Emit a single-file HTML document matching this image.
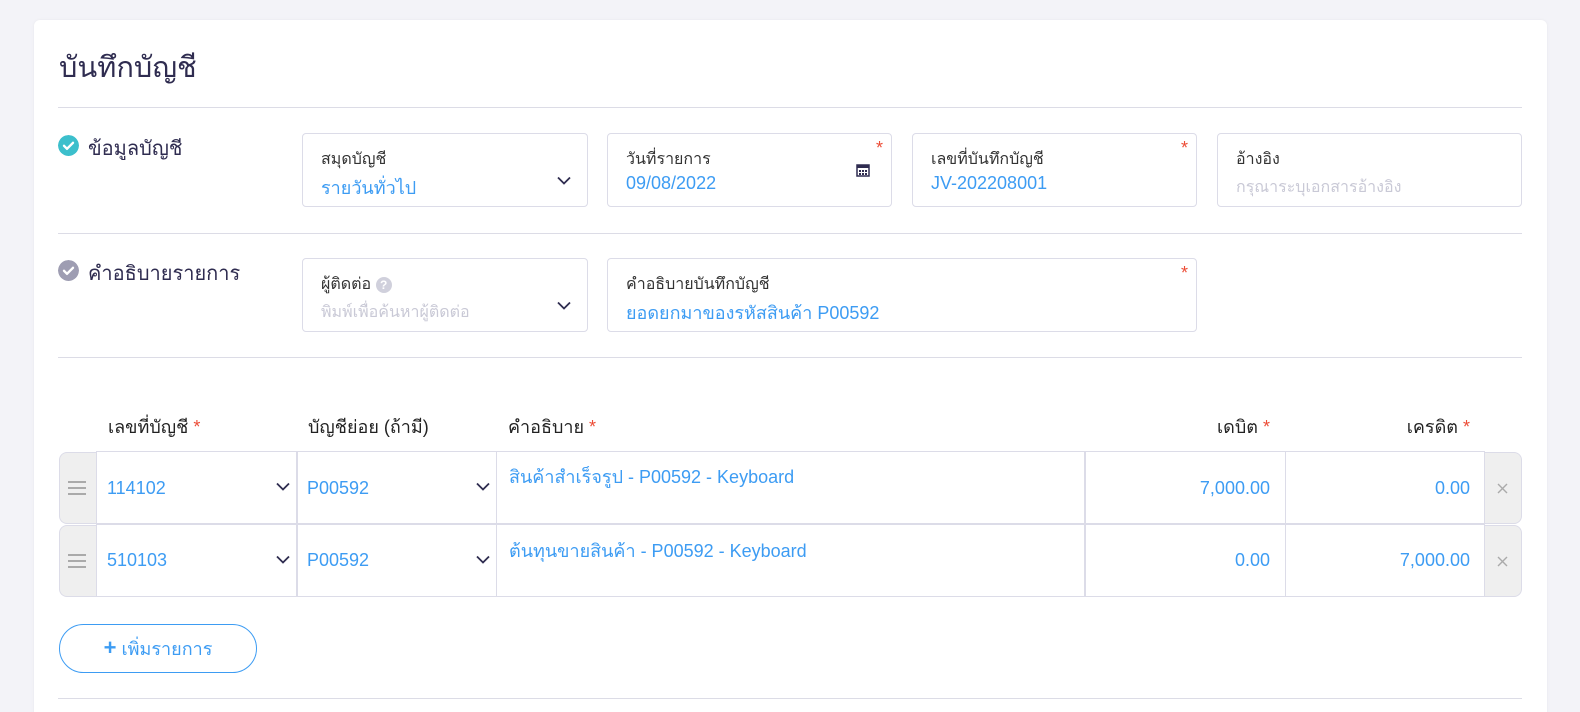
<!DOCTYPE html>
<html style="width:1580px;height:712px;overflow:hidden"><head><meta charset="utf-8">
<style>
*{box-sizing:border-box;margin:0;padding:0}
html,body{width:1580px;height:712px;overflow:hidden}
body{background:#f3f3f8;font-family:"Liberation Sans","DejaVu Sans",sans-serif;position:relative}
.card{position:absolute;left:34px;top:20px;width:1513px;height:700px;background:#fff;border-radius:6px;box-shadow:0 0 3px rgba(0,0,0,.05)}
.abs{position:absolute}
.title{left:59px;top:44px;font-size:29px;color:#2f2c50}
.hr{position:absolute;left:58px;width:1464px;height:1px;background:#dcdce6}
.sec{font-size:20px;color:#2f2c50;left:88px}
.chk{width:21px;height:21px;border-radius:50%;left:58px}
.box{position:absolute;border:1px solid #dcdce8;border-radius:4px;height:74px;background:#fff}
.lab{position:absolute;left:18px;top:13px;font-size:16px;color:#333}
.val{position:absolute;left:18px;top:39px;font-size:18px;color:#3d9cf3}
.ph{color:#c9c9d6;font-size:16px;top:41px}
.star{position:absolute;right:8px;top:4px;color:#ec4c36;font-size:18px}
.chev{position:absolute;right:16px;top:42px}
.th{position:absolute;top:412px;font-size:18px;color:#222}
.th b{color:#ec4c36;font-weight:normal}
.cell{position:absolute;border:1px solid #dcdce8;background:#fff;height:73px}
.cv{position:absolute;font-size:18px;color:#3d9cf3}
.side{position:absolute;background:#efefef;border:1px solid #dcdce8;height:72px}
</style></head><body>
<div class="card"></div>
<div class="abs title">บันทึกบัญชี</div>
<div class="hr" style="top:107px"></div>
<svg class="abs chk" style="top:135px" viewBox="0 0 21 21"><circle cx="10.5" cy="10.5" r="10.5" fill="#3cbfcc"/><path d="M6 10.8l3 3 6-6" stroke="#fff" stroke-width="2.4" fill="none" stroke-linecap="round" stroke-linejoin="round"/></svg>
<div class="abs sec" style="top:132px">ข้อมูลบัญชี</div>
<div class="box" style="left:302px;top:133px;width:286px"><div class="lab">สมุดบัญชี</div><div class="val">รายวันทั่วไป</div>
<svg class="chev" width="14" height="9" viewBox="0 0 14 9"><path d="M1 1.5l6 6 6-6" stroke="#2f2c50" stroke-width="1.8" fill="none"/></svg></div>
<div class="box" style="left:607px;top:133px;width:285px"><div class="lab">วันที่รายการ</div><div class="val">09/08/2022</div><div class="star">*</div>
<svg class="abs" style="left:248px;top:29px" width="14" height="14" viewBox="0 0 14 14"><rect x="1" y="2" width="12" height="11" fill="none" stroke="#2f2c50" stroke-width="1.5"/><rect x="1" y="2" width="12" height="3" fill="#2f2c50"/><path d="M3 7h2v2H3zM6 7h2v2H6zM9 7h2v2H9zM3 10h2v2H3zM6 10h2v2H6zM9 10h2v2H9z" fill="#2f2c50"/></svg></div>
<div class="box" style="left:912px;top:133px;width:285px"><div class="lab">เลขที่บันทึกบัญชี</div><div class="val">JV-202208001</div><div class="star">*</div></div>
<div class="box" style="left:1217px;top:133px;width:305px"><div class="lab">อ้างอิง</div><div class="val ph">กรุณาระบุเอกสารอ้างอิง</div></div>
<div class="hr" style="top:233px"></div>
<svg class="abs chk" style="top:260px" viewBox="0 0 21 21"><circle cx="10.5" cy="10.5" r="10.5" fill="#9e9db2"/><path d="M6 10.8l3 3 6-6" stroke="#fff" stroke-width="2.4" fill="none" stroke-linecap="round" stroke-linejoin="round"/></svg>
<div class="abs sec" style="top:257px">คำอธิบายรายการ</div>
<div class="box" style="left:302px;top:258px;width:286px"><div class="lab">ผู้ติดต่อ <span style="display:inline-block;width:16px;height:16px;border-radius:50%;background:#d0d0dc;color:#fff;font-size:12px;text-align:center;line-height:16px;font-weight:bold">?</span></div><div class="val ph">พิมพ์เพื่อค้นหาผู้ติดต่อ</div>
<svg class="chev" width="14" height="9" viewBox="0 0 14 9"><path d="M1 1.5l6 6 6-6" stroke="#2f2c50" stroke-width="1.8" fill="none"/></svg></div>
<div class="box" style="left:607px;top:258px;width:590px"><div class="lab">คำอธิบายบันทึกบัญชี</div><div class="val">ยอดยกมาของรหัสสินค้า P00592</div><div class="star">*</div></div>
<div class="hr" style="top:357px"></div>

<div class="th" style="left:108px">เลขที่บัญชี <b>*</b></div>
<div class="th" style="left:308px">บัญชีย่อย (ถ้ามี)</div>
<div class="th" style="left:508px">คำอธิบาย <b>*</b></div>
<div class="th" style="right:310px">เดบิต <b>*</b></div>
<div class="th" style="right:110px">เครดิต <b>*</b></div>

<div class="side" style="left:59px;top:452px;width:38px;border-radius:8px 0 0 8px;border-right:none"></div>
<div class="side" style="left:1484px;top:452px;width:38px;border-radius:0 8px 8px 0;border-left:none"></div>
<div class="side" style="left:59px;top:525px;width:38px;border-radius:8px 0 0 8px;border-right:none"></div>
<div class="side" style="left:1484px;top:525px;width:38px;border-radius:0 8px 8px 0;border-left:none"></div>
<svg class="abs" style="left:68px;top:481px" width="18" height="14"><path d="M0 1h18M0 7h18M0 13h18" stroke="#aaa" stroke-width="2"/></svg>
<svg class="abs" style="left:68px;top:554px" width="18" height="14"><path d="M0 1h18M0 7h18M0 13h18" stroke="#aaa" stroke-width="2"/></svg>
<svg class="abs" style="left:1497px;top:483px" width="11" height="11"><path d="M1 1l9 9M10 1l-9 9" stroke="#aaa" stroke-width="1.4"/></svg>
<svg class="abs" style="left:1497px;top:556px" width="11" height="11"><path d="M1 1l9 9M10 1l-9 9" stroke="#aaa" stroke-width="1.4"/></svg>

<div class="cell" style="left:96px;top:451px;width:201px"></div>
<div class="cell" style="left:296px;top:451px;width:201px"></div>
<div class="cell" style="left:496px;top:451px;width:590px;border-right-width:2px"></div>
<div class="cell" style="left:1085px;top:451px;width:201px"></div>
<div class="cell" style="left:1285px;top:451px;width:200px"></div>
<div class="cell" style="left:96px;top:524px;width:201px"></div>
<div class="cell" style="left:296px;top:524px;width:201px"></div>
<div class="cell" style="left:496px;top:524px;width:590px;border-right-width:2px"></div>
<div class="cell" style="left:1085px;top:524px;width:201px"></div>
<div class="cell" style="left:1285px;top:524px;width:200px"></div>
<div class="abs" style="left:296px;top:452px;width:2px;height:145px;background:#dcdce8"></div>

<div class="cv" style="left:107px;top:478px">114102</div>
<div class="cv" style="left:307px;top:478px">P00592</div>
<div class="cv" style="left:509px;top:462px">สินค้าสำเร็จรูป - P00592 - Keyboard</div>
<div class="cv" style="right:310px;top:478px">7,000.00</div>
<div class="cv" style="right:110px;top:478px">0.00</div>
<div class="cv" style="left:107px;top:550px">510103</div>
<div class="cv" style="left:307px;top:550px">P00592</div>
<div class="cv" style="left:509px;top:536px">ต้นทุนขายสินค้า - P00592 - Keyboard</div>
<div class="cv" style="right:310px;top:550px">0.00</div>
<div class="cv" style="right:110px;top:550px">7,000.00</div>
<svg class="abs" style="left:276px;top:482px" width="14" height="9"><path d="M1 1.5l6 6 6-6" stroke="#2f2c50" stroke-width="1.8" fill="none"/></svg>
<svg class="abs" style="left:476px;top:482px" width="14" height="9"><path d="M1 1.5l6 6 6-6" stroke="#2f2c50" stroke-width="1.8" fill="none"/></svg>
<svg class="abs" style="left:276px;top:555px" width="14" height="9"><path d="M1 1.5l6 6 6-6" stroke="#2f2c50" stroke-width="1.8" fill="none"/></svg>
<svg class="abs" style="left:476px;top:555px" width="14" height="9"><path d="M1 1.5l6 6 6-6" stroke="#2f2c50" stroke-width="1.8" fill="none"/></svg>

<div class="abs" style="left:59px;top:624px;width:198px;height:49px;border:1.5px solid #3d9cf3;border-radius:25px;color:#3d9cf3;font-size:18px;text-align:center;line-height:46px"><b style="font-size:22px">+</b> เพิ่มรายการ</div>
<div class="hr" style="top:698px"></div>
</body></html>
